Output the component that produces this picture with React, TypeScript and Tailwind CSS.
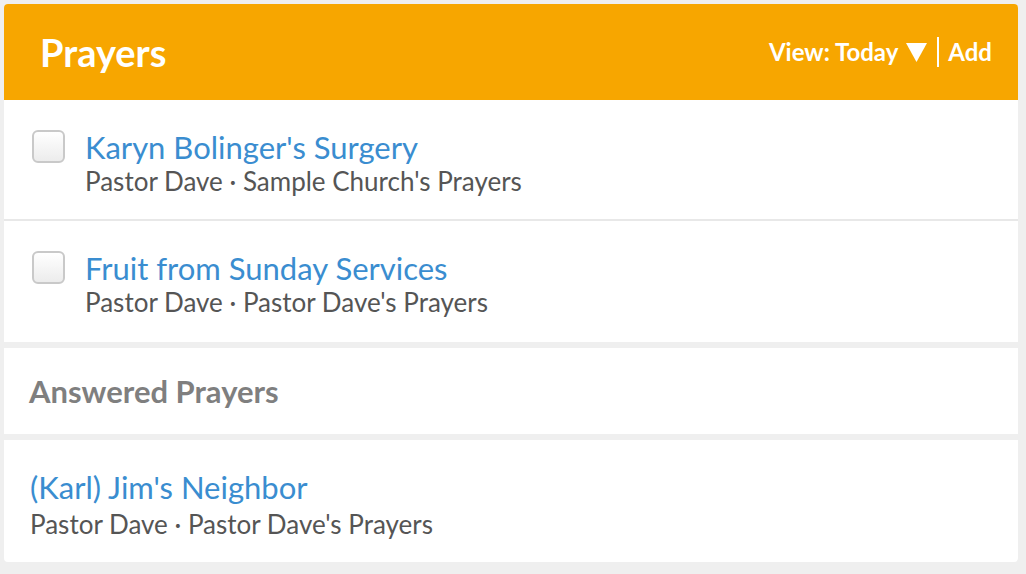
const prayers = [
  { title: "Karyn Bolinger's Surgery", by: "Pastor Dave", list: "Sample Church's Prayers" },
  { title: "Fruit from Sunday Services", by: "Pastor Dave", list: "Pastor Dave's Prayers" },
];

const answered = [{ title: "(Karl) Jim's Neighbor", by: "Pastor Dave", list: "Pastor Dave's Prayers" }];

function Checkbox() {
  return (
    <div className="w-[33px] h-[33px] shrink-0 rounded-[6px] border-2 border-[#c9c9c9] bg-gradient-to-b from-white to-[#ececec]" />
  );
}

export default function App() {
  return (
    <div
      className="w-[1026px] h-[574px] bg-[#efefef] p-[4px] pr-[8px] overflow-hidden"
      style={{ fontFamily: "Lato, 'Open Sans', sans-serif" }}
    >
      <div className="flex flex-col gap-[6px]">
        <div className="rounded-t-[4px] overflow-hidden bg-white">
          <div className="h-[96px] bg-[#f7a600] flex items-center justify-between pl-[36px] pr-[26px]">
            <h1 className="text-[38px] font-bold text-white">Prayers</h1>
            <div className="text-[24px] font-bold text-white flex items-center">
              <span>View: Today</span>
              <svg className="ml-[8px]" width="21" height="20" viewBox="0 0 21 20">
                <path d="M0 1 H21 L10.5 20 Z" fill="white" />
              </svg>
              <span className="ml-[10px] mr-[9px] w-[2px] h-[30px] bg-white" />
              <span>Add</span>
            </div>
          </div>
          {prayers.map((p, i) => (
            <div
              key={i}
              className={`flex items-start gap-[20px] pl-[28px] h-[121px] pt-[30px] ${i === 0 ? "border-b-2 border-[#e8e8e8]" : ""}`}
            >
              <Checkbox />
              <div className="flex flex-col leading-none mt-[2px]">
                <span className="text-[31px] text-[#3a8dd0]">{p.title}</span>
                <span className="text-[26px] text-[#555] mt-[5px]">
                  {p.by} · {p.list}
                </span>
              </div>
            </div>
          ))}
        </div>
        <div className="h-[86px] bg-white flex items-center pl-[25px]">
          <h2 className="text-[31px] font-bold text-[#7f7f7f]">Answered Prayers</h2>
        </div>
        {answered.map((p, i) => (
          <div key={i} className="h-[122px] bg-white rounded-b-[4px] pl-[26px] pt-[32px] flex flex-col leading-none">
            <span className="text-[31px] text-[#3a8dd0]">{p.title}</span>
            <span className="text-[26px] text-[#555] mt-[8px]">
              {p.by} · {p.list}
            </span>
          </div>
        ))}
      </div>
    </div>
  );
}
